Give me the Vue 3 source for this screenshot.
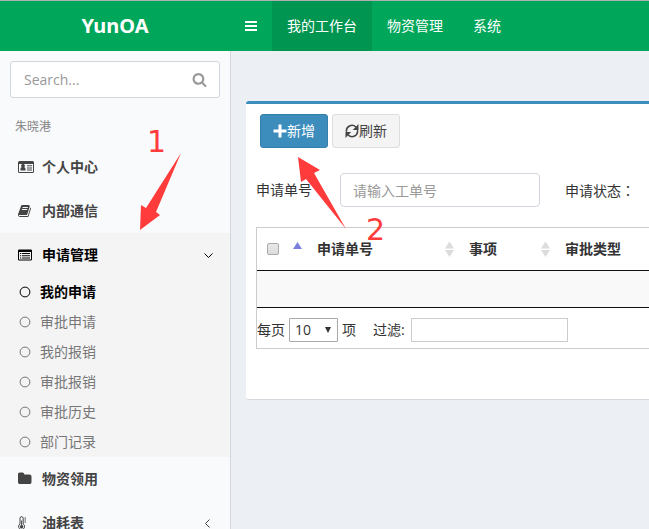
<script setup>
import { ref } from 'vue'

const topNav = [
  { label: '我的工作台', active: true },
  { label: '物资管理' },
  { label: '系统' }
]

const subItems = ['我的申请', '审批申请', '我的报销', '审批报销', '审批历史', '部门记录']
const activeSub = ref('我的申请')
const pageSize = ref('10')
const keyword = ref('')
const filter = ref('')
const orderNo = ref('')
const allChecked = ref(false)
</script>

<template>
  <div class="app">
    <header class="topbar">
      <a class="logo" href="#">YunOA</a>
      <nav class="topnav">
        <button class="toggle" type="button" aria-label="菜单">
          <svg viewBox="0 0 14 12" width="14" height="12"><path d="M1 1h12v2H1zM1 5h12v2H1zM1 9h12v2H1z" /></svg>
        </button>
        <a v-for="n in topNav" :key="n.label" href="#" :class="['toplink', { active: n.active }]">{{ n.label }}</a>
      </nav>
    </header>

    <div class="body">
      <aside class="sidebar">
        <form class="search" @submit.prevent>
          <input v-model="keyword" type="text" placeholder="Search..." aria-label="Search" />
          <button type="submit" aria-label="Search">
            <svg viewBox="0 0 1792 1792" width="15" height="15"><path d="M1216 832q0-185-131.500-316.500t-316.500-131.500-316.500 131.500-131.500 316.500 131.500 316.500 316.500 131.500 316.500-131.500 131.500-316.500zm512 832q0 52-38 90t-90 38q-54 0-90-38l-343-342q-179 124-399 124-143 0-273.500-55.500t-225-150-150-225-55.500-273.500 55.500-273.500 150-225 225-150 273.500-55.500 273.500 55.500 225 150 150 225 55.500 273.500q0 220-124 399l343 343q37 37 37 90z" /></svg>
          </button>
        </form>

        <div class="user">朱晓港</div>

        <ul class="menu">
          <li>
            <a class="item" href="#">
              <span class="icon">
                <svg viewBox="0 0 16 14" width="16" height="14">
                  <path fill-rule="evenodd" d="M1.500 1h13Q16 1 16 2.500v9Q16 13 14.500 13h-13Q0 13 0 11.500v-9Q0 1 1.500 1zM1 4v7.500q0 .5.5.5h13q.5 0 .5-.5V4z" />
                  <path d="M2.500 10.500V9q0-1.500 1.300-1.700a1.900 1.900 0 1 1 2.400 0Q7.500 7.500 7.500 9v1.500zM9 5.200h5v1H9zM9 7.400h5v1H9zM9 9.600h5v1H9z" />
                </svg>
              </span>
              <span class="text">个人中心</span>
            </a>
          </li>
          <li>
            <a class="item" href="#">
              <span class="icon">
                <svg viewBox="0 0 1792 1792" width="14" height="14"><path d="M1639 478q40 57 18 129l-275 906q-19 64-76.500 107.500t-122.500 43.500h-923q-77 0-148.500-53.500t-99.500-131.500q-24-67-2-127 0-4 3-27t4-37q1-8-3-21.500t-3-19.500q2-11 8-21t16.500-23.500 16.500-23.500q23-38 45-91.500t30-91.500q3-10 .5-30t-.5-28q3-11 17-28t17-23q21-36 42-92t25-90q1-9-2.500-32t.5-28q4-13 22-30.500t22-22.500q19-26 42.500-84.500t27.500-96.500q1-8-3-25.500t-2-26.500q2-8 9-18t18-23 17-21q8-12 16.500-30.500t15-35 16-36 19.500-32 26.500-23.500 36-11.500 47.500 5.500l-1 3q38-9 51-9h761q74 0 114 56t18 130l-274 906q-36 119-71.500 153.500t-128.500 34.500h-869q-27 0-38 15-11 16-1 43 24 70 144 70h923q29 0 56-15.500t35-41.500l300-987q7-22 5-57 38 15 59 43zm-1064 2q-4 13 2 22.500t20 9.500h608q13 0 25.500-9.500t16.500-22.500l21-64q4-13-2-22.500t-20-9.500h-608q-13 0-25.500 9.500t-16.500 22.500zm-83 256q-4 13 2 22.500t20 9.500h608q13 0 25.500-9.500t16.500-22.500l21-64q4-13-2-22.500t-20-9.500h-608q-13 0-25.500 9.500t-16.500 22.500z" /></svg>
              </span>
              <span class="text">内部通信</span>
            </a>
          </li>
          <li class="open">
            <a class="item" href="#">
              <span class="icon">
                <svg viewBox="0 0 14 14" width="14" height="14">
                  <path fill-rule="evenodd" d="M1.200 1.500h11.600Q14 1.500 14 2.700v8.600q0 1.200-1.200 1.200H1.200Q0 12.500 0 11.300V2.700Q0 1.500 1.200 1.500zM1 4v7.500h12V4z" />
                  <path d="M2 5h1.200v1H2zM4 5h8v1H4zM2 7.200h1.200v1H2zM4 7.200h8v1H4zM2 9.400h1.200v1H2zM4 9.400h8v1H4z" />
                </svg>
              </span>
              <span class="text">申请管理</span>
              <svg class="caret" viewBox="0 0 9 9" width="9" height="9"><path d="M.5 2.500 4.500 6.500 8.500 2.500" /></svg>
            </a>
            <ul class="sub">
              <li v-for="s in subItems" :key="s">
                <a href="#" :class="['subitem', { active: s === activeSub }]" @click.prevent="activeSub = s">
                  <svg viewBox="0 0 12 12" width="12" height="12"><circle cx="6" cy="6" r="4.900" /></svg>
                  <span>{{ s }}</span>
                </a>
              </li>
            </ul>
          </li>
          <li>
            <a class="item" href="#">
              <span class="icon">
                <svg viewBox="64 64 1728 1728" width="14" height="14"><path d="M1728 608v704q0 92-66 158t-158 66h-1216q-92 0-158-66t-66-158v-960q0-92 66-158t158-66h320q92 0 158 66t66 158v32h672q92 0 158 66t66 158z" /></svg>
              </span>
              <span class="text">物资领用</span>
            </a>
          </li>
          <li>
            <a class="item" href="#">
              <span class="icon">
                <svg viewBox="0 0 9 14" width="9" height="14">
                  <path class="line" d="M2 8V2.300a1.600 1.600 0 0 1 3.200 0V8a3 3 0 1 1-3.200 0z" />
                  <path d="M3.100 4.500h1v4.600a1.700 1.700 0 1 1-1 0zM6.500 1.500H8v1H6.500zM6.500 3.500H8v1H6.500zM6.500 5.500H8v1H6.500z" />
                </svg>
              </span>
              <span class="text">油耗表</span>
              <svg class="caret" viewBox="0 0 9 9" width="9" height="9"><path d="M5.500 .5 1.500 4.500 5.500 8.500" /></svg>
            </a>
          </li>
        </ul>
      </aside>

      <main class="content">
        <section class="box">
          <div class="actions">
            <button class="btn primary" type="button">
              <svg viewBox="0 0 14 14" width="14" height="14"><path d="M5.500 .5h3v5h5v3h-5v5h-3v-5h-5v-3h5z" /></svg>新增
            </button>
            <button class="btn" type="button">
              <svg viewBox="0 0 14 14" width="14" height="14">
                <path class="arc" d="M1.500 7.800A5.500 5.500 0 0 1 10.800 3M12.500 6.200A5.500 5.500 0 0 1 3.200 11" />
                <path d="M13.500 0v6H7.800zM.5 14V8h5.700z" />
              </svg>刷新
            </button>
          </div>

          <div class="filters">
            <label for="order-no">申请单号</label>
            <input id="order-no" v-model="orderNo" type="text" placeholder="请输入工单号" />
            <span class="status">申请状态：</span>
          </div>

          <div class="grid">
            <table>
              <colgroup>
                <col class="c-check" /><col class="c-order" /><col class="c-matter" /><col />
              </colgroup>
              <thead>
                <tr>
                  <th>
                    <div class="cell">
                      <input v-model="allChecked" type="checkbox" aria-label="全选" />
                      <svg class="sort asc" viewBox="0 0 9 18" width="9" height="18"><path d="M4.500 2 9 9H0z" /></svg>
                    </div>
                  </th>
                  <th>
                    <div class="cell">申请单号
                      <svg class="sort" viewBox="0 0 9 18" width="9" height="18"><path d="M4.500 1.500 9 8.500H0zM0 10h9l-4.500 7z" /></svg>
                    </div>
                  </th>
                  <th>
                    <div class="cell">事项
                      <svg class="sort" viewBox="0 0 9 18" width="9" height="18"><path d="M4.500 1.500 9 8.500H0zM0 10h9l-4.500 7z" /></svg>
                    </div>
                  </th>
                  <th><div class="cell">审批类型</div></th>
                </tr>
              </thead>
              <tbody>
                <tr><td colspan="4"></td></tr>
              </tbody>
            </table>
            <div class="pager">
              <label for="size">每页</label>
              <span class="select">
                <select id="size" v-model="pageSize">
                  <option>10</option>
                  <option>25</option>
                  <option>50</option>
                </select>
                <svg viewBox="0 0 6 6" width="6" height="6"><path d="M0 0h6L3 6z" /></svg>
              </span>
              <span>项</span>
              <label class="filter-label" for="filter">过滤:</label>
              <input id="filter" v-model="filter" type="text" />
            </div>
          </div>
        </section>
      </main>
    </div>

    <svg class="notes" viewBox="0 0 400 260" width="400" height="260">
      <path d="M140 230 141 205 146 208 181 153 156 212 160 215z" />
      <path d="M298 157 320 170 314 173 346 229 306 179 301 182z" />
      <text x="147" y="152">1</text>
      <text x="366" y="240">2</text>
    </svg>
  </div>
</template>

<style>
body {
  background: #ecf0f5;
}
</style>

<style scoped>
* {
  box-sizing: border-box;
}
.app {
  position: relative;
  display: flex;
  flex-direction: column;
  height: 100vh;
  overflow: hidden;
  border-top: 1px solid #b0b0b0;
  font: 14px/20px "Open Sans", "Noto Sans CJK SC", sans-serif;
  color: #333;
}
a {
  color: inherit;
  text-decoration: none;
}
input,
button,
select {
  font: inherit;
  color: inherit;
  margin: 0;
}
svg {
  flex: none;
  fill: currentColor;
}
ul {
  list-style: none;
  margin: 0;
  padding: 0;
}
.topbar {
  display: flex;
  flex: none;
  height: 50px;
  background: #00a65a;
  color: #fff;
}
.logo {
  width: 230px;
  font-family: "Noto Sans", sans-serif;
  font-size: 20px;
  font-weight: 700;
  line-height: 50px;
  text-align: center;
}
.topnav {
  display: flex;
}
.toggle {
  display: flex;
  align-items: center;
  padding: 0 14px;
  border: 0;
  background: none;
  color: #fff;
}
.toplink {
  padding: 15px;
  white-space: nowrap;
}
.toplink.active {
  background: #009551;
}
.body {
  display: flex;
  flex: 1;
  min-height: 0;
}
.sidebar {
  flex: none;
  width: 231px;
  background: #f9fafc;
  border-right: 1px solid #d2d6de;
  overflow: hidden;
}
.search {
  display: flex;
  height: 37px;
  margin: 10px;
  border: 1px solid #d2d6de;
  border-radius: 3px;
  background: #fff;
}
.search input {
  flex: 1;
  min-width: 0;
  padding: 0 13px;
  border: 0;
  outline: 0;
  background: none;
}
.search button {
  display: flex;
  align-items: center;
  padding: 0 12px;
  border: 0;
  background: none;
  color: #999;
}
input::placeholder {
  color: #999;
  opacity: 1;
}
.user {
  padding: 9px 15px 8px;
  font-size: 12px;
  color: #848484;
}
.item {
  display: flex;
  align-items: center;
  height: 44px;
  padding: 0 17px 0 18px;
  font-weight: 700;
  color: #444;
}
.icon {
  display: flex;
  width: 24px;
}
.item .text {
  flex: 1;
}
.icon .line,
.caret path {
  fill: none;
  stroke: currentColor;
}
.open {
  background: #f4f4f5;
}
.open > .item {
  color: #000;
}
.subitem {
  display: flex;
  align-items: center;
  gap: 9px;
  height: 30px;
  padding-left: 19px;
  color: #777;
}
.subitem circle {
  fill: none;
  stroke: currentColor;
}
.subitem.active {
  color: #000;
  font-weight: 700;
}
.content {
  flex: 1;
  min-width: 0;
  padding: 50px 0 0 15px;
}
.box {
  padding: 10px 0 50px 10px;
  border-top: 3px solid #3c8dbc;
  border-bottom: 1px solid #d5d8dc;
  border-radius: 3px 0 0 3px;
  background: #fff;
}
.actions {
  display: flex;
  gap: 4px;
  padding-left: 4px;
}
.btn {
  display: flex;
  align-items: center;
  justify-content: center;
  height: 34px;
  padding: 0 12px;
  border: 1px solid #ddd;
  border-radius: 3px;
  background: #f4f4f4;
  color: #444;
  white-space: nowrap;
}
.btn.primary {
  border-color: #367fa9;
  background: #3c8dbc;
  color: #fff;
}
.btn .arc {
  fill: none;
  stroke: currentColor;
  stroke-width: 1.5;
}
.filters {
  display: flex;
  align-items: center;
  margin: 25px 0 20px;
  white-space: nowrap;
}
.filters label {
  width: 84px;
}
.filters input {
  flex: none;
  width: 200px;
  height: 34px;
  padding: 0 12px;
  border: 1px solid #d2d6de;
  border-radius: 4px;
  background: #fff;
}
.filters .status {
  margin-left: 25px;
  font-family: "Noto Sans CJK TC", sans-serif;
}
.grid {
  border: 1px solid #ccc;
  border-right: 0;
}
table {
  width: 100%;
  table-layout: fixed;
  border-collapse: collapse;
}
.c-check {
  width: 50px;
}
.c-order {
  width: 152px;
}
.c-matter {
  width: 96px;
}
th {
  height: 42px;
  padding: 0 5px 0 10px;
  border-bottom: 1px solid #111;
  text-align: left;
  white-space: nowrap;
}
.cell {
  display: flex;
  align-items: center;
  justify-content: space-between;
}
.cell input {
  appearance: none;
  width: 12px;
  height: 12px;
  border: 1px solid #aaa;
  border-radius: 2px;
  background: linear-gradient(#e8e8e8, #dcdcdc);
}
.cell input:checked {
  background: #3c8dbc;
}
.sort {
  color: #dcdcdc;
}
.sort.asc {
  color: #7b80dc;
}
td {
  height: 37px;
  padding: 0;
  border-bottom: 1px solid #111;
  background: #f9f9f9;
}
.pager {
  display: flex;
  align-items: center;
  gap: 4px;
  padding: 10px 0 6px;
}
.select {
  position: relative;
}
.select select {
  display: block;
  appearance: none;
  width: 49px;
  height: 24px;
  padding: 0 5px;
  border: 1px solid #a9a9a9;
  border-radius: 1px;
  background: #fff;
}
.select svg {
  position: absolute;
  top: 9px;
  right: 7px;
  pointer-events: none;
}
.filter-label {
  margin-left: 13px;
}
.pager input {
  width: 157px;
  height: 24px;
  margin-left: 2px;
  padding: 0 4px;
  border: 1px solid #ccc;
  background: #fff;
}
.notes {
  position: absolute;
  top: -1px;
  left: 0;
  color: #ff3b3b;
  font: 30px "DejaVu Sans", sans-serif;
  pointer-events: none;
}
</style>
